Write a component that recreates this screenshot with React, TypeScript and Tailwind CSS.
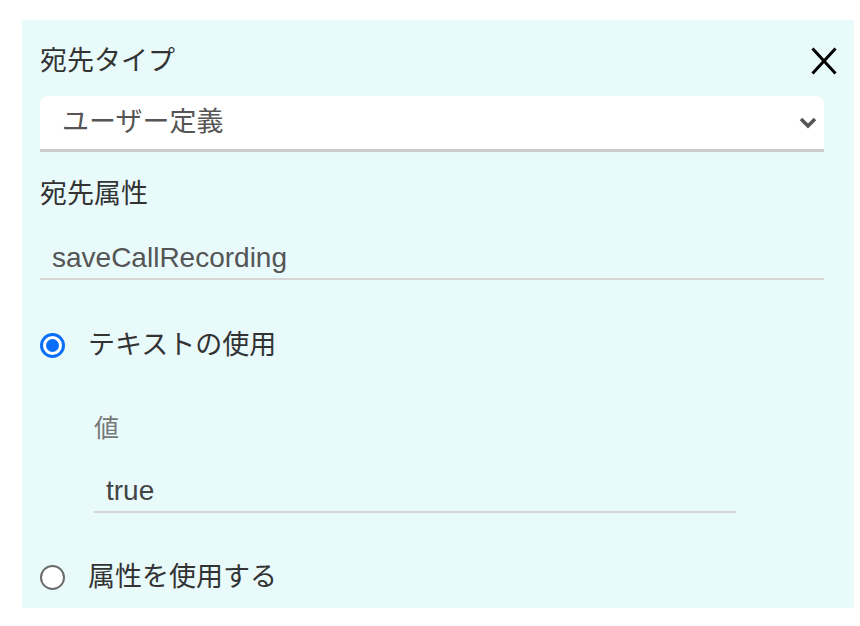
import { useState } from 'react';

const font = { fontFamily: '"Liberation Sans", "Noto Sans CJK JP", sans-serif' };

function Radio({ checked }: { checked: boolean }) {
  return checked ? (
    <span className="flex h-[25px] w-[25px] shrink-0 items-center justify-center rounded-full border-[3px] border-[#0a6ff7] bg-white">
      <span className="h-[13px] w-[13px] rounded-full bg-[#0a6ff7]" />
    </span>
  ) : (
    <span className="h-[25px] w-[25px] shrink-0 rounded-full border-2 border-[#6b6b6b] bg-white" />
  );
}

export default function App() {
  const [mode, setMode] = useState<'text' | 'attr'>('text');

  return (
    <div className="min-h-[626px] bg-white pl-[22px] pt-[20px]" style={font}>
      <div className="flex h-[588px] w-[832px] flex-col bg-[#e9fafb] pl-[18px] pr-[30px] pt-[23px]">
        <div className="flex items-center justify-between">
          <span className="text-[27px] leading-[36px] text-[#333]">宛先タイプ</span>
          <button className="mr-[-15px] flex h-[36px] w-[30px] items-center justify-center">
            <svg width="26" height="28" viewBox="0 0 26 28">
              <path d="M1.5 1.5 L24.5 26.5 M24.5 1.5 L1.5 26.5" stroke="#000" strokeWidth="3" />
            </svg>
          </button>
        </div>

        <div className="mt-[17px] flex h-[56px] items-center justify-between rounded-t-[8px] border-b-[3px] border-[#cccccc] bg-white pl-[22px] pr-[7px]">
          <span className="text-[27px] text-[#555]">ユーザー定義</span>
          <svg width="18" height="12" viewBox="0 0 18 12">
            <path d="M2 2 L9 9 L16 2" fill="none" stroke="#555" strokeWidth="3.5" />
          </svg>
        </div>

        <span className="mt-[24px] text-[27px] leading-[36px] text-[#333]">宛先属性</span>

        <div className="mt-[26px] flex h-[42px] items-center border-b-2 border-[#d6d6d6] pl-[12px]">
          <span className="text-[28px] text-[#555]">saveCallRecording</span>
        </div>

        <label className="mt-[47px] flex items-center gap-[23px]" onClick={() => setMode('text')}>
          <Radio checked={mode === 'text'} />
          <span className="text-[27px] leading-[36px] text-[#333]">テキストの使用</span>
        </label>

        <div className="ml-[54px] w-[642px]">
          <div className="mt-[48px] text-[25px] leading-[34px] text-[#777]">値</div>
          <div className="mt-[26px] flex h-[42px] items-center border-b-2 border-[#d6d6d6] pl-[12px]">
            <span className="text-[28px] text-[#444]">true</span>
          </div>
        </div>

        <label className="mt-[46px] flex items-center gap-[23px]" onClick={() => setMode('attr')}>
          <Radio checked={mode === 'attr'} />
          <span className="text-[27px] leading-[36px] text-[#333]">属性を使用する</span>
        </label>
      </div>
    </div>
  );
}
